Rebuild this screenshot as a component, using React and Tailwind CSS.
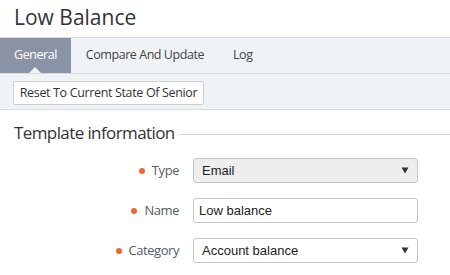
import React from "react";

const Arrow = () => (
  <svg width="8" height="7" viewBox="0 0 8 7" className="absolute right-[9px] top-[9px]">
    <path d="M0.5 0.5 H7.5 L4 6.5 Z" fill="#333" />
  </svg>
);

function Row({ label, children }) {
  return (
    <div className="flex items-center h-[25px]">
      <div className="w-[179px] flex justify-end items-center">
        <span className="w-[6px] h-[6px] rounded-full bg-[#f26430] mr-[7px]"></span>
        <span className="text-[13px] tracking-[-0.45px] text-[#555b63]">{label}</span>
      </div>
      <div className="ml-[14px] w-[225px] h-[25px] relative">{children}</div>
    </div>
  );
}

export default function App() {
  return (
    <div className="w-[450px] h-[275px] bg-white overflow-hidden" style={{ fontFamily: '"Open Sans", sans-serif' }}>
      <div className="h-[37px] pl-[14px] pt-[1px] text-[21px] leading-[32px] text-[#333]">Low Balance</div>
      <div className="h-[37px] bg-[#f0f3f6] border-t border-b border-[#d7dce2] flex text-[12.5px] tracking-[-0.45px] text-[#444]">
        <div className="relative bg-[#8a93a5] text-white px-[14px] flex items-center">
          General
          <span className="absolute left-[29px] bottom-0 w-0 h-0 border-l-[6px] border-r-[6px] border-b-[6px] border-l-transparent border-r-transparent border-b-[#f0f3f6]"></span>
        </div>
        <div className="px-[15px] flex items-center">Compare And Update</div>
        <div className="px-[14px] flex items-center">Log</div>
      </div>
      <div className="h-[36px] bg-[#f0f3f6] border-b border-[#d7dce2] pl-[13px] pt-[5px]">
        <button className="h-[24px] w-[191px] bg-white border border-[#ccd1d8] rounded-[2px] text-[12.5px] tracking-[-0.35px] text-[#333] leading-[22px]">
          Reset To Current State Of Senior
        </button>
      </div>
      <div className="flex items-center pl-[14px] mt-[12px] h-[22px]">
        <span className="text-[17px] tracking-[-0.6px] text-[#333]">Template information</span>
        <span className="flex-1 h-px bg-[#d4d4d4] ml-[4px] mt-[2px]"></span>
      </div>
      <div className="mt-[14px] flex flex-col gap-[15px]">
        <Row label="Type">
          <div className="w-full h-full bg-[#eeeeee] border border-[#c2c7ce] rounded-[3px] pl-[8px] text-[13px] leading-[23px] text-[#222]" style={{ fontFamily: '"Liberation Sans", Arial, sans-serif' }}>
            Email
          </div>
          <Arrow />
        </Row>
        <Row label="Name">
          <div className="w-full h-full bg-white border border-[#c2c7ce] rounded-[3px] pl-[5px] text-[13px] leading-[23px] text-[#222]" style={{ fontFamily: '"Liberation Sans", Arial, sans-serif' }}>
            Low balance
          </div>
        </Row>
        <Row label="Category">
          <div className="w-full h-full bg-white border border-[#c2c7ce] rounded-[3px] pl-[8px] text-[13px] leading-[23px] text-[#222]" style={{ fontFamily: '"Liberation Sans", Arial, sans-serif' }}>
            Account balance
          </div>
          <Arrow />
        </Row>
      </div>
    </div>
  );
}
